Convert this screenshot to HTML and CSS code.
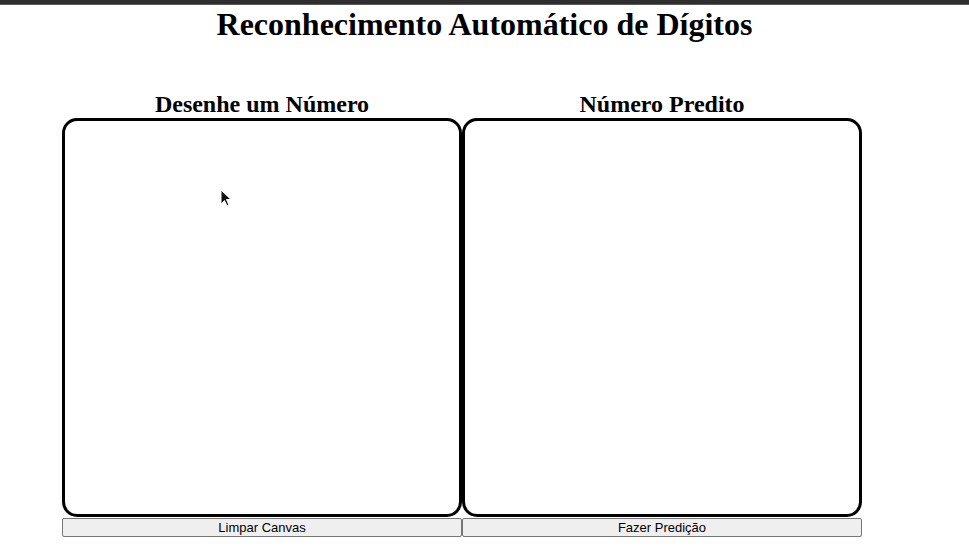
FILE: index.html
```html
<!DOCTYPE html>
<html lang="pt-BR">

<head>
    <meta charset="UTF-8">
    <meta name="viewport" content="width=device-width, initial-scale=1.0">
    <title>Reconhecimento de Dígitos</title>
    <link rel="stylesheet" href="styles.css">
</head>

<body>
    <div class="top-bar"></div>
    <h1 class="title">Reconhecimento Automático de Dígitos</h1>

    <div class="boards">
        <div class="board">
            <h2>Desenhe um Número</h2>
            <div class="canvas-box" id="draw-canvas">
                <svg class="cursor" width="12" height="19" viewBox="0 0 12 19">
                    <path d="M1 1 L1 15 L4.5 11.5 L7 17 L9 16 L6.5 10.5 L11 10.5 Z" fill="#111" stroke="#fff" stroke-width="1"/>
                </svg>
            </div>
            <button class="btn" onclick="clearCanvas()">Limpar Canvas</button>
        </div>
        <div class="board">
            <h2>Número Predito</h2>
            <div class="canvas-box" id="result-canvas"></div>
            <button class="btn">Fazer Predição</button>
        </div>
    </div>

    <script>
        function clearCanvas() {
            // nada desenhado ainda
        }
    </script>
</body>

</html>
```

FILE: styles.css
```css
body {
    margin: 0;
    background-color: #ffffff;
    font-family: "Liberation Serif", "Times New Roman", serif;
    color: #000;
}

.top-bar {
    height: 4px;
    background-color: #2e2e2e;
    border-bottom: 1px solid #5a5a5a;
}

.title {
    text-align: center;
    font-size: 32px;
    font-weight: bold;
    margin: 1px 0 0 0;
    line-height: 37px;
}

.boards {
    display: flex;
    padding-left: 62px;
    margin-top: 47px;
}

.board {
    width: 400px;
    display: flex;
    flex-direction: column;
    align-items: center;
}

.board h2 {
    font-size: 24px;
    font-weight: bold;
    margin: 0;
    line-height: 28px;
}

.canvas-box {
    position: relative;
    box-sizing: border-box;
    width: 400px;
    height: 399px;
    border: 3px solid #000;
    border-radius: 15px;
    background-color: #fff;
}

.cursor {
    position: absolute;
    top: 68px;
    left: 155px;
}

.btn {
    box-sizing: border-box;
    width: 400px;
    height: 19px;
    margin-top: 1px;
    padding: 0;
    font-family: "Liberation Sans", Arial, sans-serif;
    font-size: 13px;
    color: #000;
    background-color: #efefef;
    border: 1px solid #767676;
    border-radius: 2px;
}
```
